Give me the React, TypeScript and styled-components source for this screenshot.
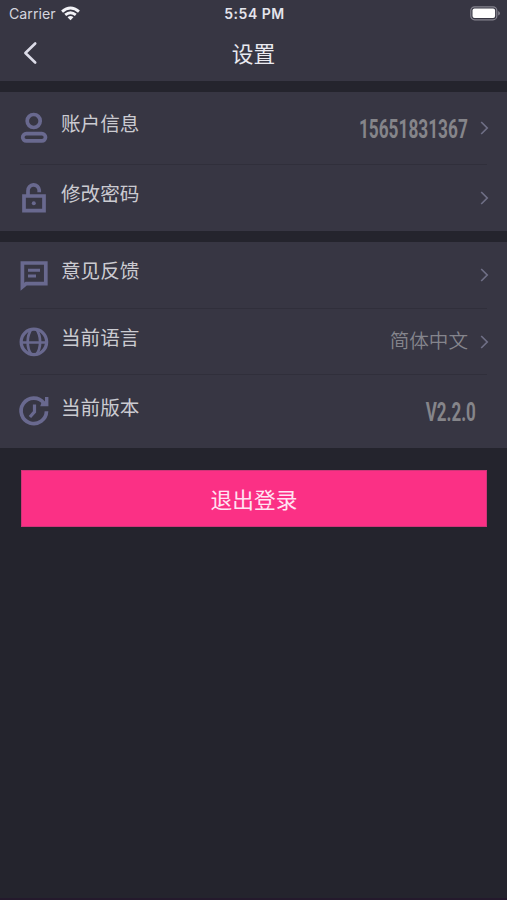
import React from "react";
import styled, { createGlobalStyle } from "styled-components";

const GlobalStyle = createGlobalStyle`
  * { box-sizing: border-box; }
  body {
    margin: 0;
    background: #24242d;
    font-family: "Noto Sans", "Noto Sans CJK SC", sans-serif;
  }
`;

const Screen = styled.main`
  display: flex;
  flex-direction: column;
  width: 507px;
  height: 900px;
  overflow: hidden;
  background: #24242d;
  border-bottom: 2px solid #24192c;
`;

const Header = styled.header`
  height: 81px;
  background: #373643;
`;

const StatusBar = styled.div`
  display: grid;
  grid-template-columns: 1fr auto 1fr;
  align-items: center;
  height: 27px;
  padding: 0 7px 0 9px;
  color: #e4e4ec;
  font: 400 14.2px/27px Inter, sans-serif;
`;

const Carrier = styled.div`
  display: flex;
  align-items: center;
  gap: 5px;
  color: #d4d4de;
`;

const Time = styled.div`
  font-size: 14px;
  font-weight: 600;
  letter-spacing: 0.5px;
`;

const Battery = styled.svg`
  justify-self: end;
`;

const NavBar = styled.div`
  display: grid;
  grid-template-columns: 54px 1fr 54px;
  align-items: center;
  height: 52px;
`;

const BackButton = styled.button`
  display: flex;
  padding: 0 0 0 22px;
  border: 0;
  background: none;
`;

const Title = styled.h1`
  margin: 0 0 1px;
  color: #e9e9f0;
  font: 400 21.7px/32px "Noto Sans CJK SC", sans-serif;
  text-align: center;
`;

const Group = styled.section`
  margin-top: 11px;
  padding: 0 20px;
  background: #373643;
`;

const Row = styled.div<{ $height: number; $top: number; $divided?: boolean }>`
  display: grid;
  grid-template-columns: 41px 1fr auto;
  align-items: start;
  height: ${(p) => p.$height}px;
  padding-top: ${(p) => p.$top}px;
  border-bottom: ${(p) => (p.$divided ? "1px solid #302f3b" : "0")};
`;

const IconSlot = styled.svg`
  display: block;
  width: 28px;
  height: 30px;
  overflow: visible;
  fill: none;
  stroke: #69698f;
  stroke-width: 3.7;
`;

const Label = styled.span<{ $lift: number }>`
  margin-top: ${(p) => -p.$lift}px;
  color: #cbcbd1;
  font: 400 19.6px/30px "Noto Sans CJK SC", sans-serif;
`;

const Trailing = styled.div<{ $end?: number }>`
  display: flex;
  align-items: center;
  height: 30px;
  margin-right: ${(p) => p.$end ?? -2}px;
`;

const Value = styled.span`
  margin: -4px 12px 0 0;
  color: #85858d;
  font: 350 19.6px/30px "Noto Sans CJK SC", sans-serif;
`;

const NumberSlot = styled.div<{ $width: number; $gap: number }>`
  display: flex;
  justify-content: flex-end;
  width: ${(p) => p.$width}px;
  margin: 3px ${(p) => p.$gap}px 0 0;
`;

const Condensed = styled.span<{ $scale: number }>`
  display: block;
  color: #85858a;
  font: 700 25px/30px Roboto, sans-serif;
  white-space: nowrap;
  transform: scaleX(${(p) => p.$scale});
  transform-origin: right center;
`;

const LogoutButton = styled.button`
  height: 57px;
  margin: 22px 20px 0 21px;
  padding: 0;
  border: 1px solid #cf3478;
  background: #fb3085;
  color: #ffe4f2;
  font: 400 21.7px/32px "Noto Sans CJK SC", sans-serif;
`;

const Chevron = () => (
  <svg width="9" height="14" viewBox="0 0 9 14" fill="none" stroke="#6f6f86" strokeWidth="1.7">
    <path d="M1.2 1 7.2 7 1.2 13" />
  </svg>
);

const UserIcon = () => (
  <IconSlot viewBox="0 0 28 30">
    <circle cx="13.7" cy="8" r="6.5" />
    <rect x="2.7" y="20.7" width="22.8" height="7.2" rx="3.6" />
  </IconSlot>
);

const LockIcon = () => (
  <IconSlot viewBox="0 0 28 30">
    <path d="M4 13h20v14.6H4zM8 13V7.7a5.6 5.6 0 0 1 11.2-.5v2" />
    <circle cx="13.8" cy="20.3" r="2" fill="#69698f" stroke="none" />
  </IconSlot>
);

const FeedbackIcon = () => (
  <IconSlot viewBox="0 0 28 30">
    <path d="M2.4 3h23.4v20.6H6.2l-3.8 3.2z" />
    <path d="M8 10.3h12M8 16h8" strokeWidth="3" />
  </IconSlot>
);

const GlobeIcon = () => (
  <IconSlot viewBox="0 0 28 30">
    <circle cx="13.9" cy="14.9" r="12.7" strokeWidth="3.3" />
    <path
      d="M11.5 2C6.4 9.2 6.4 20.6 11.5 27.8M16.3 2c5.1 7.2 5.1 18.6 0 25.8M1.5 15.5h25"
      strokeWidth="2.7"
    />
  </IconSlot>
);

const VersionIcon = () => (
  <IconSlot viewBox="0 0 28 30">
    <path d="M23.8 7A12.7 12.7 0 1 0 26.5 15.2" />
    <path d="M25 .9h3.4v9.3h-8.2l1.3-3.4 3.5-1z" fill="#69698f" stroke="none" />
    <path d="M14.5 8.6v7.2L9.9 21" strokeWidth="3.2" />
  </IconSlot>
);

export default function App() {
  return (
    <Screen>
      <GlobalStyle />
      <Header>
        <StatusBar>
          <Carrier>
            Carrier
            <svg width="19" height="15" viewBox="0 0 18 14" fill="none" stroke="#f2f2f7" strokeWidth="2.7">
              <path d="M1 5.2Q9-1.7 17 5.2M4 8.3q5-4.1 10 0" />
              <path d="m6.2 10.5 2.8 2.9 2.8-2.9Q9 8.3 6.2 10.5Z" fill="#f2f2f7" stroke="none" />
            </svg>
          </Carrier>
          <Time>5:54 PM</Time>
          <Battery width="30" height="15" viewBox="0 0 30 15">
            <rect x="0.8" y="0.8" width="26" height="13" rx="3.8" fill="none" stroke="#85848f" strokeWidth="1.2" />
            <rect x="2.5" y="2.5" width="22.6" height="9.6" rx="2" fill="#ffffff" />
            <path d="M28.2 5v4.6q1.7-.7 1.7-2.3T28.2 5Z" fill="#85848f" />
          </Battery>
        </StatusBar>
        <NavBar>
          <BackButton aria-label="返回">
            <svg width="16" height="24" viewBox="0 0 16 24" fill="none" stroke="#dcdce8" strokeWidth="2.6" strokeLinecap="round" strokeLinejoin="round">
              <path d="M13.2 2.5 3.4 12l9.8 9.5" />
            </svg>
          </BackButton>
          <Title>设置</Title>
        </NavBar>
      </Header>

      <Group>
        <Row $height={73} $top={21} $divided>
          <UserIcon />
          <Label $lift={5}>账户信息</Label>
          <Trailing>
            <NumberSlot $width={110} $gap={12}>
              <Condensed $scale={0.69}>15651831367</Condensed>
            </NumberSlot>
            <Chevron />
          </Trailing>
        </Row>
        <Row $height={66} $top={18}>
          <LockIcon />
          <Label $lift={5}>修改密码</Label>
          <Trailing><Chevron /></Trailing>
        </Row>
      </Group>

      <Group>
        <Row $height={67} $top={18} $divided>
          <FeedbackIcon />
          <Label $lift={5}>意见反馈</Label>
          <Trailing><Chevron /></Trailing>
        </Row>
        <Row $height={66} $top={18} $divided>
          <GlobeIcon />
          <Label $lift={5}>当前语言</Label>
          <Trailing>
            <Value>简体中文</Value>
            <Chevron />
          </Trailing>
        </Row>
        <Row $height={73} $top={21}>
          <VersionIcon />
          <Label $lift={4}>当前版本</Label>
          <Trailing $end={11}>
            <NumberSlot $width={50} $gap={0}>
              <Condensed $scale={0.68}>V2.2.0</Condensed>
            </NumberSlot>
          </Trailing>
        </Row>
      </Group>

      <LogoutButton>退出登录</LogoutButton>
    </Screen>
  );
}
